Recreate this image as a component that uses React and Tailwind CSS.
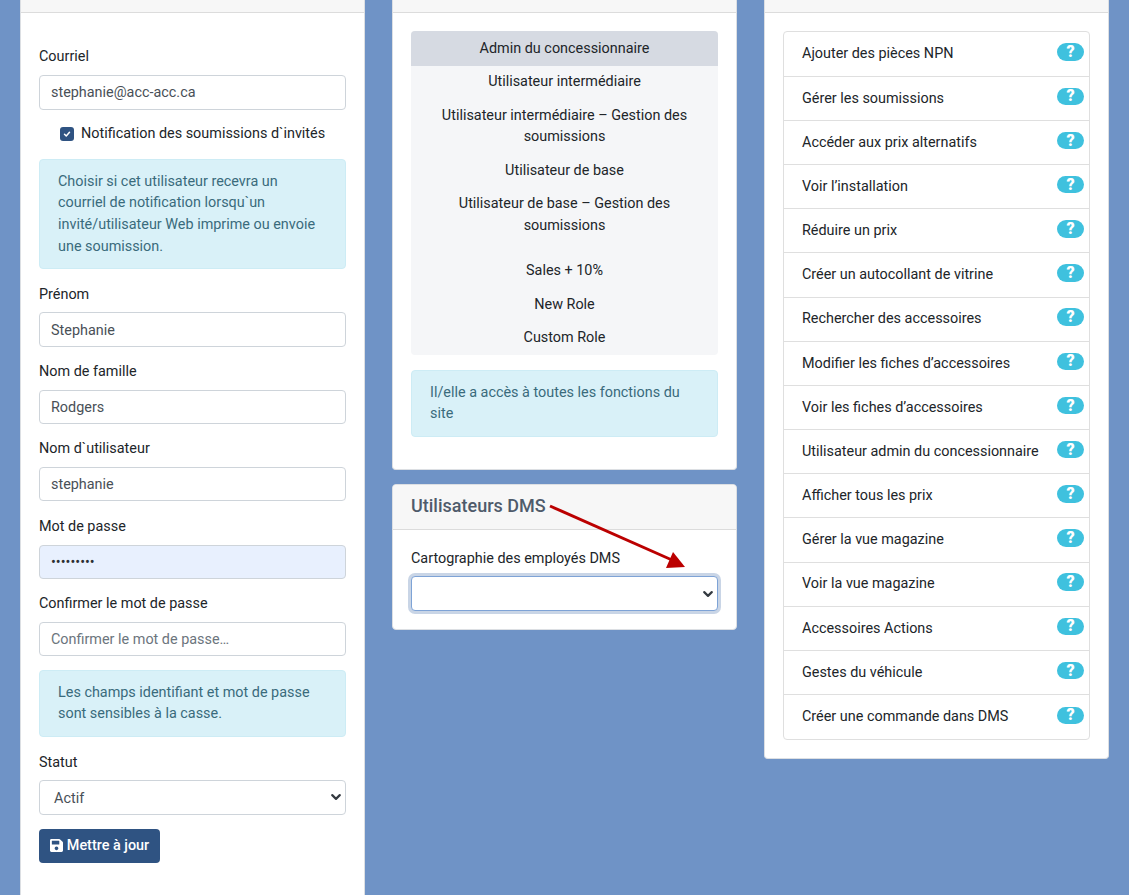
import React from "react";

const permissions = [
  "Ajouter des pièces NPN",
  "Gérer les soumissions",
  "Accéder aux prix alternatifs",
  "Voir l’installation",
  "Réduire un prix",
  "Créer un autocollant de vitrine",
  "Rechercher des accessoires",
  "Modifier les fiches d’accessoires",
  "Voir les fiches d’accessoires",
  "Utilisateur admin du concessionnaire",
  "Afficher tous les prix",
  "Gérer la vue magazine",
  "Voir la vue magazine",
  "Accessoires Actions",
  "Gestes du véhicule",
  "Créer une commande dans DMS",
];

const Chevron = () => (
  <svg className="absolute right-[5px] top-1/2 -translate-y-1/2" width="10" height="10" viewBox="0 0 16 16" fill="none">
    <path d="M2 5l6 6 6-6" stroke="#343a40" strokeWidth="3.4" strokeLinecap="round" strokeLinejoin="round" />
  </svg>
);

// tight: the label sits one pixel closer to its control
const Field = ({ label, tight, className = "", children }) => (
  <div className={className}>
    <div className={`h-[21px] leading-[21px] text-[14.4px] text-[#212529] ${tight ? "mb-[7px]" : "mb-[8px]"}`}>{label}</div>
    {children}
  </div>
);

const Input = ({ value, placeholder, bg = "bg-white", text = "" }) => (
  <div className={`h-[34.5px] border border-[#ced4da] rounded-[4px] px-[11px] pt-[2px] flex items-center text-[14.4px] ${bg} ${placeholder ? "text-[#6c757d]" : "text-[#495057]"} ${text}`}>
    {value || placeholder}
  </div>
);

const Info = ({ className = "", children }) => (
  <div className={`bg-[#d9f1f8] border border-[#cdecf5] rounded-[4px] px-[18px] py-[11px] text-[14.4px] leading-[21.6px] text-[#3a6b7c] ${className}`}>
    {children}
  </div>
);

export default function App() {
  return (
    <div className="h-[895px] w-[1129px] overflow-hidden bg-[#6f93c6] pl-[20px] flex gap-[27px] items-start font-['Roboto',sans-serif]">
      {/* colonne gauche */}
      <div className="w-[345px] h-[910px] shrink-0 bg-white border-x border-[#dcdfe3]">
        <div className="h-[13px] bg-[#f7f7f7] border-b border-[#dcdcdc]" />
        <div className="px-[18px] pt-[33px]">
          <Field label="Courriel">
            <Input value="stephanie@acc-acc.ca" />
          </Field>
          <label className="flex items-center gap-[7px] pl-[21px] mt-[14px] h-[21px] text-[14.4px] text-[#212529]">
            <span className="w-[14px] h-[14px] rounded-[3px] bg-[#2f5382] flex items-center justify-center">
              <svg width="8" height="8" viewBox="0 0 16 16" fill="none">
                <path d="M3 8.5l3.5 3.5L13 4.5" stroke="white" strokeWidth="3" strokeLinecap="round" strokeLinejoin="round" />
              </svg>
            </span>
            Notification des soumissions d`invités
          </label>
          <Info className="mt-[14px] h-[110px] pt-[11.4px]">
            Choisir si cet utilisateur recevra un courriel de notification lorsqu`un invité/utilisateur Web imprime ou envoie une soumission.
          </Info>
          <Field label="Prénom" tight className="mt-[15px]">
            <Input value="Stephanie" text="h-[35px] !pt-[3px]" />
          </Field>
          <Field label="Nom de famille" className="mt-[14px]">
            <Input value="Rodgers" />
          </Field>
          <Field label="Nom d`utilisateur" className="mt-[13.5px]">
            <Input value="stephanie" />
          </Field>
          <Field label="Mot de passe" className="mt-[14.5px]">
            <Input value="•••••••••" bg="bg-[#e8f0fe]" text="!text-[#2b2f33]" />
          </Field>
          <Field label="Confirmer le mot de passe" className="mt-[13.5px]">
            <Input placeholder="Confirmer le mot de passe…" />
          </Field>
          <Info className="mt-[13.5px] h-[67px] pt-[11.4px]">
            Les champs identifiant et mot de passe sont sensibles à la casse.
          </Info>
          <Field label="Statut" tight className="mt-[15px]">
            <div className="relative">
              <div className="h-[35px] border border-[#ced4da] rounded-[4px] pl-[14px] pt-[3px] flex items-center text-[14.4px] text-[#495057] bg-white">Actif</div>
              <Chevron />
            </div>
          </Field>
          <button className="mt-[14px] h-[34px] w-[121px] bg-[#2f5382] rounded-[4px] flex items-center justify-center gap-[4px] text-[14.4px] font-medium text-white">
            <svg width="13" height="15" viewBox="0 0 448 512" fill="white">
              <path d="M433.941 129.941l-83.882-83.882A48 48 0 0 0 316.118 32H48C21.49 32 0 53.49 0 80v352c0 26.51 21.49 48 48 48h352c26.51 0 48-21.49 48-48V163.882a48 48 0 0 0-14.059-33.941zM224 416c-35.346 0-64-28.654-64-64 0-35.346 28.654-64 64-64s64 28.654 64 64c0 35.346-28.654 64-64 64zm96-304.52V212c0 6.627-5.373 12-12 12H76c-6.627 0-12-5.373-12-12V108c0-6.627 5.373-12 12-12h228.52c3.183 0 6.235 1.264 8.485 3.515l3.48 3.48A11.996 11.996 0 0 1 320 111.48z" />
            </svg>
            Mettre à jour
          </button>
        </div>
      </div>

      {/* colonne centrale */}
      <div className="w-[345px] shrink-0 flex flex-col gap-[14px]">
        <div className="h-[470px] bg-white border border-[#dcdfe3] border-t-0 rounded-b-[4px]">
          <div className="h-[13px] bg-[#f7f7f7] border-b border-[#dcdcdc]" />
          <div className="px-[18px] pt-[18px]">
            <div className="h-[324px] bg-[#f5f6f8] rounded-[4px] text-center text-[14.4px] leading-[21.6px] text-[#212529] overflow-hidden">
              <div className="h-[35px] bg-[#d6dae2] flex items-center justify-center">Admin du concessionnaire</div>
              <div className="pt-[5px]">Utilisateur intermédiaire</div>
              <div className="pt-[12px] px-[24px]">Utilisateur intermédiaire – Gestion des soumissions</div>
              <div className="pt-[12px]">Utilisateur de base</div>
              <div className="pt-[12px] px-[24px]">Utilisateur de base – Gestion des soumissions</div>
              <div className="pt-[23px]">Sales + 10%</div>
              <div className="pt-[12.5px]">New Role</div>
              <div className="pt-[12px]">Custom Role</div>
            </div>
            <Info className="mt-[15px] h-[67px] pt-[10.6px]">Il/elle a accès à toutes les fonctions du site</Info>
          </div>
        </div>
        <div className="relative h-[146px] bg-white border border-[#dcdfe3] rounded-[4px]">
          <div className="h-[45px] pb-[4px] bg-[#f7f7f7] border-b border-[#dcdcdc] rounded-t-[4px] px-[18px] flex items-center text-[18px] font-medium text-[#4f5b6b]">
            Utilisateurs DMS
          </div>
          <div className="px-[18px] pt-[18px]">
            <div className="h-[21px] leading-[21px] text-[14.4px] text-[#212529] mb-[7px]">Cartographie des employés DMS</div>
            <div className="relative">
              <div className="h-[35px] bg-white border border-[#7ea3d6] rounded-[4px] shadow-[0_0_0_3px_#c9d5e6]" />
              <Chevron />
            </div>
          </div>
          <svg className="absolute left-[155px] top-[18px]" width="140" height="68" viewBox="0 0 140 68" fill="none">
            <path d="M2 3L124 57" stroke="#bb0000" strokeWidth="3" />
            <path d="M137 64L118 65L125 49Z" fill="#bb0000" />
          </svg>
        </div>
      </div>

      {/* colonne droite */}
      <div className="w-[345px] h-[759px] shrink-0 bg-white border border-[#dcdfe3] border-t-0 rounded-b-[4px]">
        <div className="h-[13px] bg-[#f7f7f7] border-b border-[#dcdcdc]" />
        <div className="px-[18px] pt-[18px]">
          <ul className="border border-[#dfdfdf] rounded-[4px] pt-[0.6px]">
            {permissions.map((name) => (
              <li key={name} className="h-[44.18px] border-b border-[#dfdfdf] last:border-b-0 pl-[18px] pr-[5px] flex items-center justify-between text-[14.4px] text-[#212529]">
                <span>{name}</span>
                <span className="w-[27px] h-[17.5px] -mt-[4px] rounded-full bg-[#3fc1de] flex items-center justify-center text-[16px] font-black text-white leading-none">?</span>
              </li>
            ))}
          </ul>
        </div>
      </div>
    </div>
  );
}
